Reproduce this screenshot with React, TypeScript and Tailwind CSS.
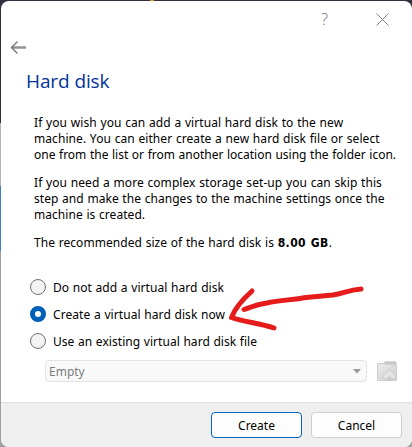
import type { ReactNode } from "react";

function Line({ children, className = "" }: { children: ReactNode; className?: string }) {
  return (
    <div className="h-4 whitespace-nowrap [word-spacing:0.5px]">
      <span className={className}>{children}</span>
    </div>
  );
}

function Radio({ label, checked = false, className = "" }: { label: string; checked?: boolean; className?: string }) {
  return (
    <label className="flex h-[27px] items-start gap-[7px] pt-[6px]">
      <span
        className={
          checked
            ? "size-4 rounded-full border-[5px] border-[#005fb8] bg-white"
            : "size-4 rounded-full border border-[#727272] bg-[#f3f3f3]"
        }
      />
      <span className={`whitespace-nowrap pt-px [word-spacing:0.4px] ${className}`}>{label}</span>
    </label>
  );
}

function BackArrow() {
  return (
    <svg width="16" height="16" viewBox="0 0 16 16" fill="none">
      <path d="M1.5 7.5H16" stroke="#939393" strokeWidth="2.6" />
      <path d="M7.5 1.5L1.5 7.5L7.5 13.500" stroke="#757575" strokeWidth="1.4" />
    </svg>
  );
}

function FolderIcon() {
  return (
    <svg width="20" height="20" viewBox="0 0 20 20">
      <defs>
        <linearGradient id="folder" x1="0" y1="0" x2="1" y2="1">
          <stop offset="0" stopColor="#ebebeb" />
          <stop offset="1" stopColor="#cecece" />
        </linearGradient>
      </defs>
      <path d="M7 3V1.5L8 .3H18.5L19.5 1.5V4H7Z" fill="#c8c8c8" />
      <path d="M.5 2.5H7.5L9 3.5H19.5V19.5H.5Z" fill="url(#folder)" stroke="#cfcfcf" />
      <path d="M12.5 8.5L19 15V17L16.5 18.5L12.5 15.5L8.5 18.500L6 17V15Z" fill="#e3e3e3" stroke="#c1c1c1" strokeWidth=".7" />
      <path d="M10 19.5L12.5 17L15 19.5Z" fill="#c4c4c4" />
    </svg>
  );
}

export default function App() {
  return (
    <div className="relative h-[447px] w-[412px] overflow-hidden bg-[linear-gradient(#34303f_0_123px,#b5b5b5_123px_186px,#3b80bd_186px_251px,#a0a0a0_251px)] pl-px pt-px font-['Noto_Sans',sans-serif] text-[12px] leading-4 text-black">
      <div className="absolute left-[150px] top-0 h-px w-1 bg-[#c29a28]" />
      <div className="flex h-[446px] w-[411px] flex-col overflow-hidden rounded-[8px] bg-white">
        <header className="flex h-9 items-center justify-end pr-[23px] text-[#858585]">
          <span className="mr-[48px] font-['Open_Sans',sans-serif] text-[16px] font-light text-[#707070]">?</span>
          <svg width="13" height="13" viewBox="0 0 13 13" fill="none" stroke="#858585">
            <path d="M.5 .5L12.5 12.5M12.5 .5L.5 12.5" />
          </svg>
        </header>
        <div className="flex h-[22px] items-center pl-[9px]">
          <BackArrow />
        </div>
        <h1 className="mt-[7px] flex h-[31px] items-center pb-px pl-[25px] font-['Open_Sans',sans-serif] text-[19px] leading-[30px] tracking-[-0.1px] text-[#003399]">
          Hard disk
        </h1>
        <section className="flex flex-col gap-3 pl-[33px] pt-[18px]">
          <div>
            <Line className="tracking-[0.075px]">If you wish you can add a virtual hard disk to the new</Line>
            <Line className="tracking-[0.07px]">machine. You can either create a new hard disk file or select</Line>
            <Line className="tracking-[-0.01px]">one from the list or from another location using the folder icon.</Line>
          </div>
          <div>
            <Line className="tracking-[0.07px]">If you need a more complex storage set-up you can skip this</Line>
            <Line className="tracking-[0.045px]">step and make the changes to the machine settings once the</Line>
            <Line className="tracking-[0.05px]">machine is created.</Line>
          </div>
          <Line className="tracking-[0.055px]">
            The recommended size of the hard disk is{" "}
            <b className="font-['DejaVu_Sans_Condensed','DejaVu_Sans',sans-serif] text-[12px] tracking-[0.45px] [font-stretch:condensed]">8.00 GB</b>.
          </Line>
        </section>
        <section className="flex flex-col pl-[29px] pt-[22px]">
          <Radio label="Do not add a virtual hard disk" className="tracking-[0.07px]" />
          <Radio label="Create a virtual hard disk now" className="tracking-[0.08px]" checked />
          <Radio label="Use an existing virtual hard disk file" className="tracking-[0.05px]" />
          <div className="ml-[15px] mt-[6px] flex items-center gap-[10px]">
            <div className="flex h-[22px] w-[322px] items-center justify-between rounded-[4px] border border-[#e3e3e3] bg-[#f9f9f9] pl-[3px] pr-[5px] text-[#7d7d7d]">
              <span className="pt-[2px]">Empty</span>
              <svg width="8" height="5" viewBox="0 0 8 5">
                <path d="M0 0H8L4 4.5Z" fill="#999" />
              </svg>
            </div>
            <FolderIcon />
          </div>
        </section>
        <footer className="mt-auto flex h-[45px] justify-end gap-[9px] border-t border-[#dfdfdf] bg-[#efefef] pr-[10px] pt-[9px]">
          <button className="h-[26px] w-[91px] rounded-[4px] border border-[#0067c0] bg-[#fdfdfd] pt-[2px]">Create</button>
          <button className="h-[26px] w-[91px] rounded-[4px] border border-[#cfcfcf] bg-[#fdfdfd] pt-[2px]">Cancel</button>
        </footer>
      </div>
      <svg className="absolute left-0 top-0" width="412" height="447" fill="none" stroke="#e61b1b" strokeWidth="5" strokeLinecap="round" strokeLinejoin="round">
        <path d="M361 289C349 290 344 293 333 295L306 297.500C293 300 280 300 267 303C258 304 251 307 244 309.500" />
        <path d="M252 291C242 300 235 308 231.500 317.500C244 322 260 323 274 328" />
      </svg>
    </div>
  );
}
